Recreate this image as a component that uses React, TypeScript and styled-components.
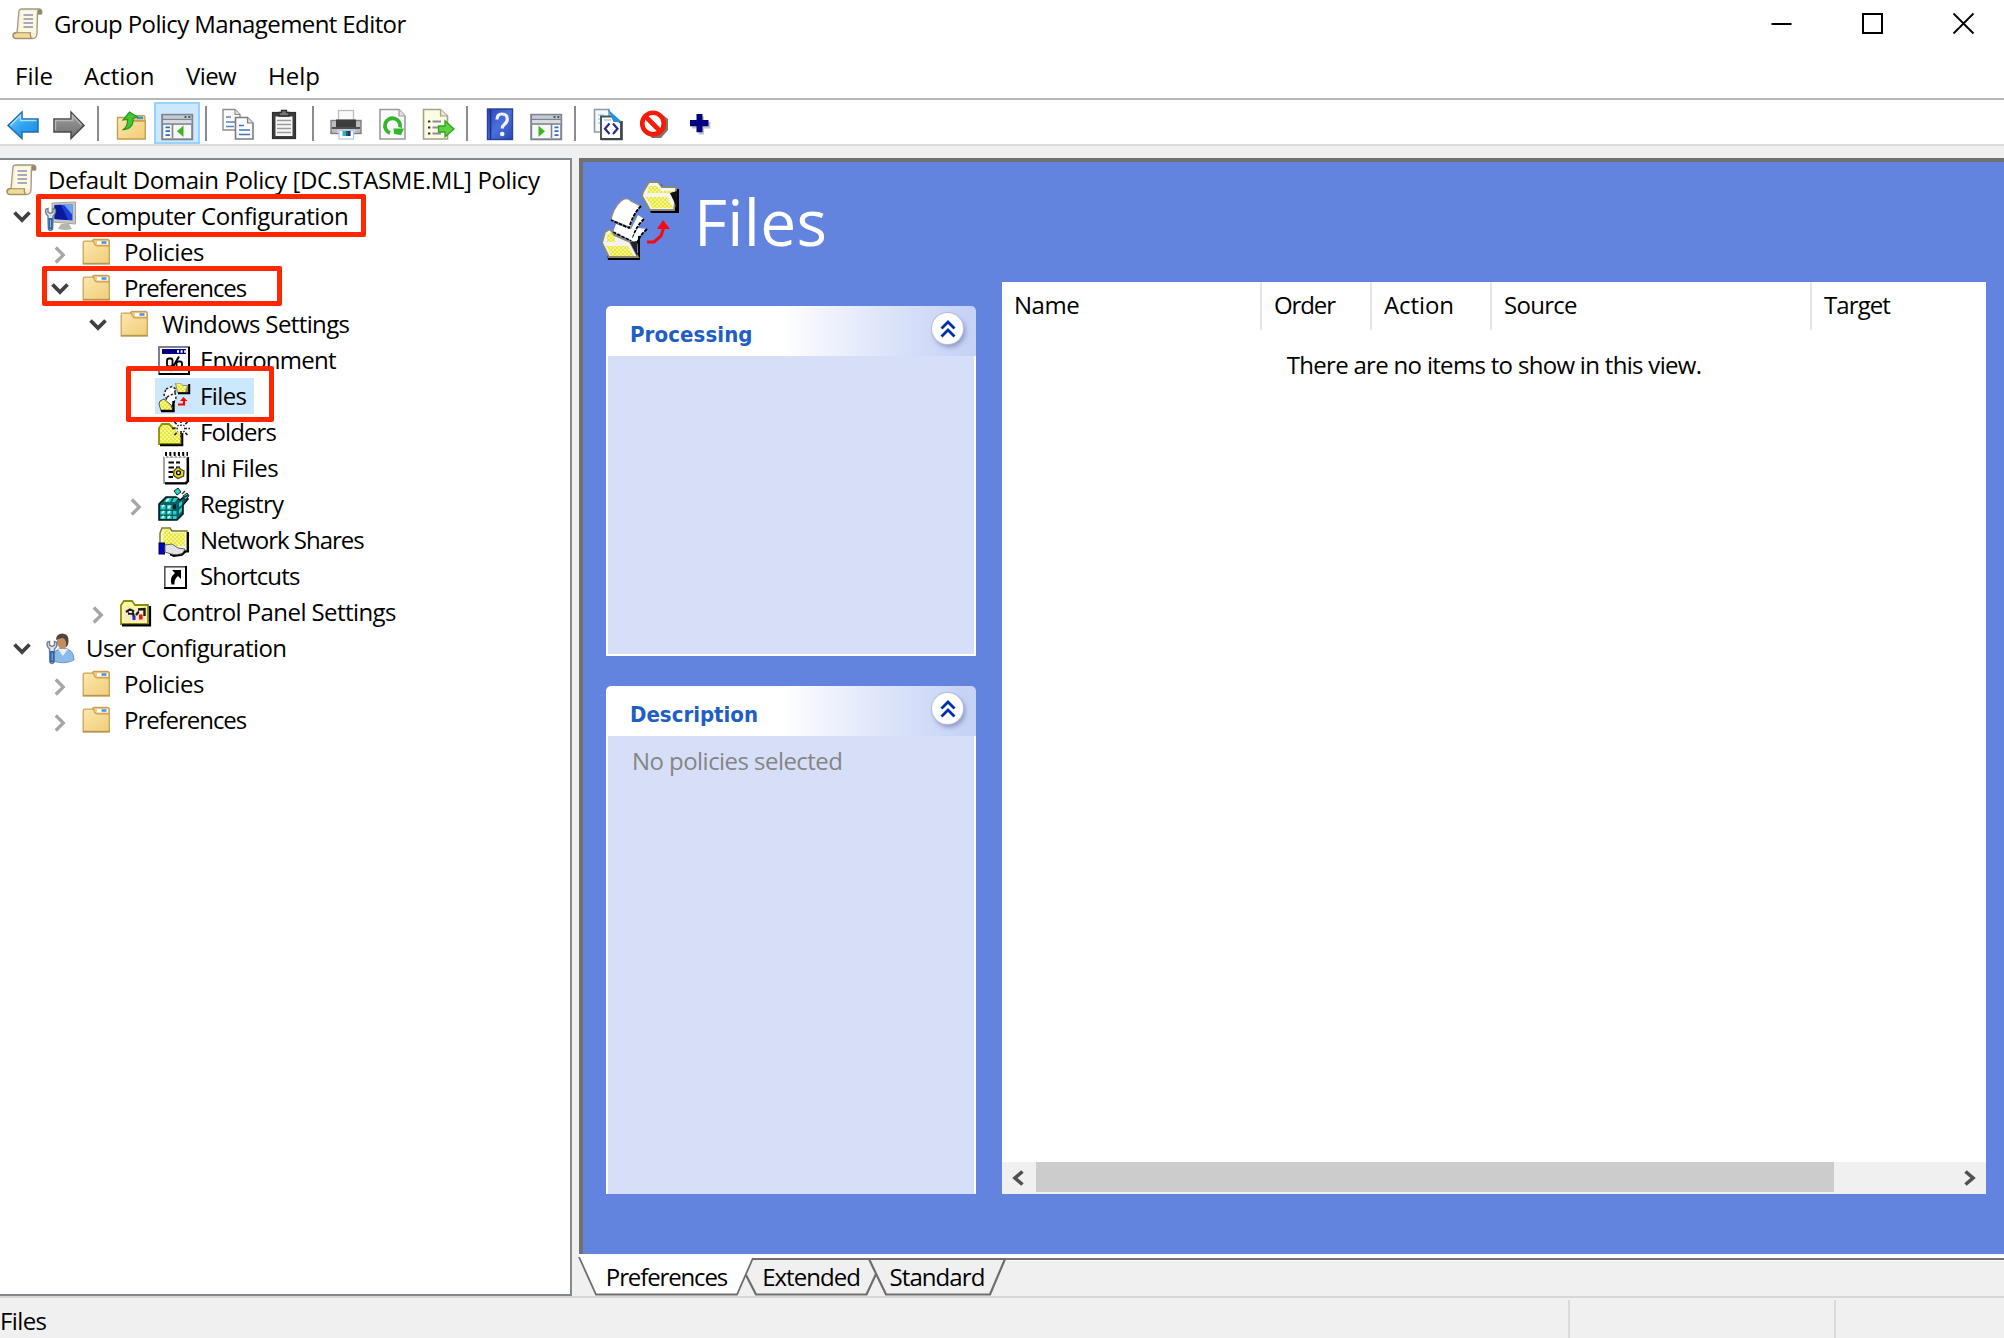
import React from "react";
import styled, { createGlobalStyle, css } from "styled-components";

const GlobalStyle = createGlobalStyle`
  * { box-sizing: border-box; }
  html, body { margin: 0; padding: 0; background: #ffffff; overflow: hidden; }
  svg { display: block; flex: none; overflow: visible; }
`;

/* ---------- shared ---------- */

const Text = styled.span<{ $ls?: number }>`
  white-space: nowrap;
  letter-spacing: ${(p) => p.$ls ?? -0.6}px;
`;

const Window = styled.div`
  width: 2004px;
  height: 1338px;
  display: flex;
  flex-direction: column;
  background: #f0f0f0;
  color: #000000;
  font-family: "Open Sans", "Noto Sans", sans-serif;
  font-size: 24px;
  line-height: 36px;
`;

/* ---------- title bar and menu ---------- */

const TitleBar = styled.header`
  flex: none;
  height: 46px;
  display: flex;
  align-items: center;
  padding: 1px 0 0 12px;
  gap: 10px;
  background: #ffffff;
`;

const WindowControls = styled.div`
  margin-left: auto;
  display: flex;
  height: 46px;
  padding-right: 30px;
  gap: 70px;
`;

const ControlButton = styled.button`
  width: 21px;
  height: 45px;
  padding: 0;
  border: 0;
  background: none;
  display: flex;
  align-items: center;
`;

const MenuBar = styled.nav`
  flex: none;
  height: 52px;
  display: flex;
  gap: 30px;
  padding: 12px 0 0 15px;
  background: #ffffff;
`;

const MenuItem = styled(Text)<{ $w: number }>`
  width: ${(p) => p.$w}px;
`;

/* ---------- toolbar ---------- */

const Toolbar = styled.div`
  flex: none;
  height: 48px;
  display: flex;
  align-items: flex-start;
  padding: 2px 0 0 0;
  background: #ffffff;
  border-top: 2px solid #b4b6b8;
  border-bottom: 2px solid #dcdcdc;
`;

const ToolButton = styled.button<{ $active?: boolean }>`
  flex: none;
  width: 46px;
  height: 42px;
  padding: 2px 0 0;
  border: 0;
  display: flex;
  align-items: center;
  justify-content: center;
  background: ${(p) => (p.$active ? "#cce8ff" : "none")};
  box-shadow: ${(p) => (p.$active ? "inset 0 0 0 2px #99d1ff" : "none")};
`;

const ToolSeparator = styled.div<{ $after: number }>`
  flex: none;
  width: 2px;
  height: 35px;
  margin: 4px ${(p) => p.$after}px 0 5px;
  background: #8c8c8c;
`;

/* ---------- main area ---------- */

const Main = styled.main`
  flex: none;
  height: 1138px;
  margin-top: 12px;
  display: flex;
`;

const TreePane = styled.aside`
  position: relative;
  flex: none;
  width: 572px;
  height: 1138px;
  border: 2px solid #828790;
  border-left: 0;
  background: #ffffff;
  padding-top: 2px;
`;

const TreeRow = styled.div<{ $level: number }>`
  height: 36px;
  display: flex;
  align-items: center;
  padding-left: ${(p) => (p.$level === 0 ? 6 : p.$level * 38 - 30)}px;
`;

const Expander = styled.div<{ $open?: boolean }>`
  flex: none;
  width: 26px;
  margin-right: 7px;
  display: flex;
  justify-content: center;
  padding-left: 1px;
  padding-top: ${(p) => (p.$open ? 2 : 6)}px;
`;

const NodeBody = styled.div<{ $selected?: boolean; $root?: boolean }>`
  height: 36px;
  display: flex;
  align-items: center;
  padding-left: ${(p) => (p.$root ? 0 : 3)}px;
  padding-right: 8px;
  gap: 10px;
  background: ${(p) => (p.$selected ? "#cce8ff" : "transparent")};
`;

const NodeLabel = styled(Text)`
  padding-bottom: 1px;
`;

const Callout = styled.div<{ $x: number; $y: number; $w: number; $h: number }>`
  position: absolute;
  left: ${(p) => p.$x}px;
  top: ${(p) => p.$y}px;
  width: ${(p) => p.$w}px;
  height: ${(p) => p.$h}px;
  border: 5.5px solid #ff2600;
  border-radius: 2px;
`;

const ResultPane = styled.section`
  flex: 1;
  margin-left: 7px;
  display: flex;
  flex-direction: column;
`;

const ResultView = styled.div`
  height: 1096px;
  border-top: 4px solid #70726f;
  border-left: 4px solid #70726f;
  background: #6284de;
  padding: 14px 18px 0 16px;
`;

const ViewHeader = styled.div`
  height: 106px;
  display: flex;
`;

const LargeIconSlot = styled.div`
  flex: none;
  width: 83px;
  padding: 5px 0 0 1px;
`;

const ViewTitle = styled.h1`
  margin: 6px 0 0 12px;
  font-size: 64px;
  line-height: 80px;
  font-weight: 400;
  letter-spacing: 0.3px;
  color: #ffffff;
`;

const ViewColumns = styled.div`
  display: flex;
  align-items: flex-start;
  gap: 26px;
  padding-left: 7px;
`;

const CardColumn = styled.div`
  flex: none;
  width: 370px;
  padding-top: 24px;
  display: flex;
  flex-direction: column;
  gap: 30px;
`;

const Card = styled.section<{ $h: number }>`
  height: ${(p) => p.$h}px;
  display: flex;
  flex-direction: column;
  border-radius: 5px 5px 0 0;
  overflow: hidden;
`;

const CardHeader = styled.header`
  flex: none;
  height: 50px;
  display: flex;
  justify-content: space-between;
  padding: 0 13px 0 24px;
  background: linear-gradient(to right, #ffffff 0%, #ffffff 47%, #dfe6fa 74%, #c6d3f7 97%);
`;

const CardTitle = styled.h2<{ $ls: number }>`
  margin: 9px 0 0;
  font-family: "DejaVu Sans Condensed", "DejaVu Sans", sans-serif;
  font-size: 22px;
  line-height: 40px;
  font-weight: 700;
  letter-spacing: ${(p) => p.$ls}px;
  color: #215dc6;
`;

const CollapseButton = styled.button`
  width: 31px;
  height: 31px;
  margin: 7px 0 0;
  padding: 0;
  border: 0;
  border-radius: 50%;
  display: flex;
  align-items: center;
  justify-content: center;
  background: #ffffff;
  box-shadow: 0 0 0 1px #b6bedb, 2px 3px 5px rgba(80, 95, 150, 0.55);
`;

const CardBody = styled.div<{ $open?: boolean }>`
  flex: 1;
  padding: 7px 0 0 24px;
  background: #d6dff7;
  border: 2px solid #ffffff;
  border-top: 0;
  color: #858585;
  ${(p) =>
    p.$open &&
    css`
      border-bottom: 0;
    `}
`;

const ListView = styled.div`
  flex: 1;
  height: 912px;
  display: flex;
  flex-direction: column;
  background: #ffffff;
`;

const ListHead = styled.div`
  flex: none;
  height: 48px;
  display: flex;
`;

const HeadCell = styled.div<{ $w: number; $last?: boolean }>`
  flex: none;
  width: ${(p) => p.$w}px;
  padding: 5px 0 0 12px;
  border-right: ${(p) => (p.$last ? "0" : "2px solid #e5e5e5")};
`;

const EmptyNote = styled.div`
  flex: 1;
  padding-top: 17px;
  text-align: center;
`;

const ScrollBar = styled.div`
  flex: none;
  height: 32px;
  display: flex;
  align-items: center;
  justify-content: space-between;
  padding: 0 10px;
  background: #f0f0f0;
`;

const ScrollThumb = styled.div`
  width: 798px;
  height: 30px;
  align-self: flex-start;
  margin-right: 118px;
  background: #cccccc;
`;

const SheetTabs = styled.div`
  flex: 1;
  display: flex;
  border-top: 4px solid #ffffff;
`;

const TabsTail = styled.div`
  flex: 1;
  margin-left: -5px;
  height: 3px;
  border-top: 2px solid #757575;
  border-bottom: 1px solid #fafafa;
`;

const Tab = styled.div<{ $w: number; $lap: number; $z: number }>`
  position: relative;
  z-index: ${(p) => p.$z};
  flex: none;
  width: ${(p) => p.$w}px;
  height: 38px;
  margin-left: ${(p) => p.$lap}px;
  display: flex;
  justify-content: center;
`;

const TabShape = styled.svg`
  position: absolute;
  left: 0;
  top: 0;
`;

const TabLabel = styled(Text)<{ $shift?: number }>`
  position: relative;
  padding-left: ${(p) => p.$shift ?? 0}px;
  line-height: 37px;
`;

const StatusBar = styled.footer`
  flex: 1;
  display: flex;
  border-top: 2px solid #d7d7d7;
`;

const StatusCell = styled.div<{ $w: number }>`
  width: ${(p) => p.$w}px;
  margin-top: 2px;
  padding-top: 3px;
  border-right: 2px solid #dadada;
`;

/* ---------- glyphs ---------- */

const Chevron = ({ open }: { open: boolean }) =>
  open ? (
    <svg width="18" height="12" viewBox="0 0 18 12">
      <path d="M1.5 1.5 9 9 16.5 1.5" fill="none" stroke="#404040" strokeWidth="3.8" />
    </svg>
  ) : (
    <svg width="12" height="18" viewBox="0 0 12 18">
      <path d="M1.8 1.5 9.3 9 1.8 16.5" fill="none" stroke="#a6a6a6" strokeWidth="3.2" />
    </svg>
  );

const Icon = ({ children }: { children: React.ReactNode }) => (
  <svg width="32" height="32" viewBox="0 0 32 32">
    {children}
  </svg>
);

const ScrollIcon = () => (
  <Icon>
    <path d="M7 2.5 Q7.5 1 10 1 H27 Q31 1.5 29.5 6 H25.5 L25 26 Q24.5 30.5 20.5 30.5 H4 Q.5 30 1 26.5 Q1.5 24.5 5 24.5 Z" fill="#f7efcf" stroke="#a39a86" strokeWidth="1.3" />
    <path d="M9 3 H24 V25 H8 Z" fill="#fdf8e2" />
    <path d="M25.5 6 Q24.5 1.5 27 1.3 Q31 1.5 29.5 6 Z" fill="#94876a" />
    <path d="M4 24.8 H18.5 Q17.5 27 19.5 30.3 H4 Q.7 30 1.2 26.6 Z" fill="#efdc9c" stroke="#a08c5c" strokeWidth="1.1" />
    <path d="M11.5 7 H21 M11.5 11 H21 M11.5 15 H21 M11.5 19 H21" stroke="#8d8fae" strokeWidth="1.6" />
  </Icon>
);

const FolderIcon = () => (
  <Icon>
    <path d="M10.5 10 V5.5 Q10.5 3.5 12.5 3.5 H25 Q27.3 3.5 27.3 5.5 V10 Z" fill="#f0d085" stroke="#c7a055" strokeWidth="1.3" />
    <rect x="15" y="5" width="11" height="3.4" fill="#fdfdfd" />
    <rect x="19.5" y="5.2" width="5" height="2.6" fill="#4a97e0" />
    <path d="M1.2 7 Q1.2 5.2 3 5.2 H11.5 Q12.5 9.8 15 9.8 H25.5 Q27.3 9.8 27.3 11.5 V27.8 H1.2 Z" fill="url(#folderFill)" stroke="#caa35a" strokeWidth="1.3" />
    <path d="M1 27.6 H27.8" stroke="#b79552" strokeWidth="1.6" />
  </Icon>
);

const Wrench = () => (
  <>
    <path d="M2 9 Q.5 13 4 16 L4.3 28 Q4.5 30.5 6.5 30.5 Q8.5 30.5 8.7 28 L9 16 Q12.5 13 11 9 L9 8.5 V12 L6.5 13.5 L4 12 V8.5 Z" fill="#dfe5ec" stroke="#6f7d8e" strokeWidth="1.4" />
    <path d="M5.4 19 H7.8 V28.5 H5.4 Z" fill="#fff" stroke="#2c67ae" strokeWidth="1.9" />
  </>
);

const ComputerIcon = () => (
  <Icon>
    <path d="M8 3 L31.5 2 V24 L8 22 Z" fill="#c9c9c4" stroke="#a3a39c" />
    <path d="M10.5 5 L28.5 4.5 V20.5 L10.5 19 Z" fill="#1c3fd6" />
    <path d="M10.5 5 L17 4.8 L24 20.1 L10.5 19 Z" fill="#0b18a0" />
    <path d="M20 4.8 L28.5 4.5 V15 Z" fill="#6ea4f8" />
    <path d="M17 24 H25 L28 29 Q22 31 14 29 Z" fill="#b5b5b1" />
    <Wrench />
  </Icon>
);

const UserIcon = () => (
  <Icon>
    <path d="M9 29 Q8 17 19 16 Q30 17 30 28 Q20 33 9 29 Z" fill="#8dbbe9" stroke="#6b98cb" />
    <path d="M14 17 L19 24 L24 17 Z" fill="#e6f1fc" />
    <ellipse cx="18.5" cy="9.5" rx="5.6" ry="7.6" fill="#c08e5f" />
    <path d="M12 8 Q12 1.5 18.5 1.5 Q25.5 2 24.5 10 Q24 14 22 15 Q23 8 19 6 Q15 6.5 12 8 Z" fill="#4e4640" />
    <g transform="translate(1.5 1)">
      <Wrench />
    </g>
  </Icon>
);

const EnvironmentIcon = () => (
  <Icon>
    <rect x="1" y="3" width="30" height="27" fill="#fff" stroke="#7e7e8c" strokeWidth="2" />
    <path d="M31 3 V30 H1" fill="none" stroke="#000" strokeWidth="2" />
    <rect x="4" y="5" width="24" height="5" fill="#000080" />
    <path d="M19 7.5 H28" stroke="#fff" strokeWidth="2.4" strokeDasharray="2 1.6" />
    <rect x="9" y="14.5" width="5.5" height="8" rx="2" fill="none" stroke="#000" strokeWidth="1.8" />
    <path d="M21 12.5 L12.500 27" stroke="#000" strokeWidth="2" />
    <rect x="18.5" y="17.5" width="5.5" height="8" rx="2" fill="none" stroke="#000" strokeWidth="1.8" />
  </Icon>
);

const FilesIcon = () => (
  <Icon>
    <path d="M17 3 H23 L25 5 H31 V13 H19 Z" fill="#8a8a8a" />
    <path d="M18 3.5 H23 L25 6 H29 L27 12 H20 Z" fill="url(#dither)" />
    <path d="M31.2 4 V13.2 H20" fill="none" stroke="#000" strokeWidth="2" />
    <path d="M8 9 L14 6.5 L18 9 L15 16 L9 19 L6 15 Z" fill="#fff" stroke="#222" strokeWidth="1.5" strokeDasharray="2.4 1.8" />
    <path d="M9 17 L17 13 L18 18 L14 26 L7 22 Z" fill="#fff" stroke="#222" strokeWidth="1.5" strokeDasharray="2.4 1.8" />
    <path d="M2 21 L6 19 L13 25 L15 31 H3 L1 24 Z" fill="url(#dither)" stroke="#555" />
    <path d="M3 31 H15.5 V21" fill="none" stroke="#000" strokeWidth="2.4" />
    <path d="M20 24.5 H26 V20" fill="none" stroke="#f00" strokeWidth="2.2" />
    <path d="M22 21 L25.5 17 L29.5 21 Z" fill="#f00" />
  </Icon>
);

const FoldersIcon = () => (
  <Icon>
    <path d="M1 12 L4 8 H11 L15 12 H23 V28 H1 Z" fill="url(#dither)" stroke="#8f8f00" strokeWidth="1.8" />
    <path d="M2 29.3 H24.3 V16" fill="none" stroke="#000" strokeWidth="2" />
    <circle cx="23" cy="12.5" r="5" fill="#fff" />
    <g stroke="#222" strokeWidth="1.7" strokeDasharray="3 1.4">
      <path d="M23 4 V10 M23 15 V21 M14 12.5 H20 M26 12.5 H32 M16.5 6 L20.5 10 M29.5 6 L25.5 10 M29.5 19 L25.5 15 M16.5 19 L20 15.5" />
    </g>
  </Icon>
);

const IniIcon = () => (
  <Icon>
    <path d="M6 5 H29 V28.5 L27 31 H6 Z" fill="#fff" stroke="#8c8c8c" strokeWidth="1.6" />
    <path d="M30 5 V29 L28 31.4 H7" fill="none" stroke="#000" strokeWidth="2.2" />
    <path d="M7 2 H30" stroke="#000" strokeWidth="4" strokeDasharray="2 2.3" />
    <path d="M6 4.6 H30" stroke="#fff" strokeWidth="1.6" strokeDasharray="2 2.3" />
    <path d="M10.5 10.5 H16 M18 10.5 H22 M10.5 15.5 H16 M18 15.5 H22 M10.5 20 H15 M10.5 25 H15" stroke="#000" strokeWidth="2.1" />
    <path d="M20 15 L23 17.5 L26 19 L25.5 24 L20 26.5 L15.5 23.5 L16 18.5 Z" fill="#e9e000" stroke="#444" strokeWidth="1.3" />
    <circle cx="20.5" cy="20.8" r="1.9" fill="#fff" stroke="#000" strokeWidth="1.3" />
  </Icon>
);

const RegistryIcon = () => (
  <Icon>
    <path d="M1 16 L8 9 H18 L22 12 L27 8 L30 11 L25 17 V26 L19 32 H1 Z" fill="#0d5f60" stroke="#001a1a" strokeWidth="1.6" />
    <g fill="#1ed3d3">
      <path d="M9 10 H14 L12 14 H6 Z M16 10 H20 L17 14 H14 Z" />
      <path d="M2.500 17 H7.500 V21.500 H2.500 Z M9 17 H13.500 V21.500 H9 Z M2.500 23 H7.500 V26.500 H2.500 Z M9 23 H13.500 V26.500 H9 Z M15 23 H18.500 V26.500 H15 Z M2.500 28 H7.500 V31 H2.500 Z M9 28 H13.500 V31 H9 Z M15 28 H18.500 V31 H15 Z" />
      <path d="M21 15 L24 13 V17 L21 19 Z M21 22 L24 19 V23 L21 26 Z" />
      <path d="M16 3 L20 0 L23 4 L19 7 Z M25 8 L29 5 L31 8 L27 12 Z" stroke="#222" strokeWidth="1" />
    </g>
    <path d="M4 19 L6 17 M10 20 L12 18 M4 25 L6 23 M10 25 L12 23 M4 30 L6 28 M10 30 L12 28 M8 13 L11 11" stroke="#fff" strokeWidth="1.6" />
    <path d="M15 17 L18 16 V21 H15 Z" fill="#001f20" />
    <path d="M24 6 L27 3 M26 9 L31 7" stroke="#333" strokeWidth="1.4" />
  </Icon>
);

const NetworkShareIcon = () => (
  <Icon>
    <path d="M2 9 L4 4 H12 L14 7 H29 V27 H2 Z" fill="#f4f4d8" stroke="#7c7c30" strokeWidth="1.5" />
    <path d="M5 9 L6 5 H11 L13 9 H27 V22 H5 Z" fill="url(#dither)" />
    <path d="M30 8 V27.5 H24" fill="none" stroke="#000" strokeWidth="2" />
    <rect x="1" y="19" width="5.5" height="11" fill="#0000c8" stroke="#000040" />
    <path d="M7 21 L14 20 L20 24 L27 25 L25 29 L19 31 L13 30 L7 28 Z" fill="#e4e4e4" stroke="#666" strokeWidth="1" />
    <path d="M12 30.5 L16 32 L24 31 L28 27" fill="none" stroke="#000" strokeWidth="1.8" />
  </Icon>
);

const ShortcutIcon = () => (
  <Icon>
    <rect x="6.8" y="6.8" width="21" height="21" fill="#fff" stroke="#555" strokeWidth="1.6" />
    <path d="M28 6 V28 H6" fill="none" stroke="#000" strokeWidth="2" />
    <path d="M14 10 H23 V19 L20 16 Q16 19 16.5 24.5 L13.5 24.5 Q11 18 17 13 Z" fill="#000" />
  </Icon>
);

const ControlPanelIcon = () => (
  <Icon>
    <path d="M1 28 V9 L4 5 H12 L15 9 H28 V28 Z" fill="#fbf6a6" stroke="#8c8c10" strokeWidth="1.8" />
    <path d="M4 12 H26 V26 H4 Z" fill="#fbe9c0" />
    <path d="M30 10 V29.3 H2" fill="none" stroke="#000" strokeWidth="2.2" />
    <path d="M6 16 L10 13.500 L14 15.500 M18 13.500 L24.500 13 V20 M8 17.500 H13 L14 21 M16 19 L19 15.500" fill="none" stroke="#1b1b1b" strokeWidth="2.4" />
    <path d="M9 16 H12 M19 16 H22" stroke="#fff" strokeWidth="1.5" />
    <rect x="12.5" y="19.500" width="3" height="4.500" fill="#1a2be0" />
    <rect x="19" y="18.500" width="3.6" height="5" fill="#e01a1a" />
  </Icon>
);

const FilesLargeIcon = () => (
  <svg width="80" height="80" viewBox="0 0 80 80">
    <path d="M46 5 L50 1 H58 L62 6 H76 V30 H48 L41 15 V10 L45 9 Z" fill="#000" transform="translate(3 2)" />
    <path d="M43 11 L49 1 H58 L62 6 H76 V14 L74 29 H50 L42 15 Z" fill="#f4f4f4" stroke="#8a8a72" strokeWidth="1.8" />
    <path d="M49 5 H57 L61 10 H73 V17 L69 12 H47 Z M46 16 H67 L73 27 H52 Z" fill="url(#dither)" />
    <path d="M70 12 L77 27 V10 Z" fill="#111" />
    <path d="M21 20 Q27 15 31 20 L41 25 Q33 33 31 47 L11 39 Q13 27 21 20 Z" fill="#fff" stroke="#8d8d8d" strokeWidth="1.4" />
    <path d="M38 34 L44 38 Q35 47 33 60 L13 51 L16 43 L31 48 Z" fill="#fff" />
    <path d="M41 25 Q33 33 29 47 L11 39" fill="none" stroke="#000" strokeWidth="1.8" strokeDasharray="3.500 1.200" />
    <path d="M44 38 Q36 45 33 57" fill="none" stroke="#000" strokeWidth="1.8" strokeDasharray="3.500 1.200" />
    <path d="M38 47 L47 48 Q36 57 35 66 L32 58 Z" fill="#fff" />
    <path d="M47 48 Q38 56 36 66 M13 51 L31 60" fill="none" stroke="#000" strokeWidth="1.8" strokeDasharray="3.500 1.200" />
    <path d="M7 72 L38 72 V55 L40 55 V79 H8 Z" fill="#000" />
    <path d="M2 62 L5 51 L10 48 L14 54 L30 61 L38 76 H9 Z" fill="#f2f2f2" stroke="#8a8a72" strokeWidth="1.8" />
    <path d="M7 54 L11 51 L15 57 V61 H7 Z M6 65 H28 L34 75 H11 Z" fill="url(#dither)" />
    <path d="M30 61 L37 75 V60 Z" fill="#222" />
    <path d="M47 61 H54 L61 55 L63 49 V45" fill="none" stroke="#f8080f" strokeWidth="3" />
    <path d="M57 48 L63 39 L70 48 Z" fill="#f8080f" />
  </svg>
);

const Defs = () => (
  <svg width="0" height="0">
    <defs>
      <pattern id="dither" width="4" height="4" patternUnits="userSpaceOnUse">
        <rect width="4" height="4" fill="#e8e83c" />
        <rect width="1.8" height="1.8" fill="#f8f8a4" />
        <rect x="2" y="2" width="1.8" height="1.8" fill="#f8f8a4" />
      </pattern>
      <linearGradient id="folderFill" x1="0" y1="0" x2="1" y2="1">
        <stop offset="0" stopColor="#fbe7ad" />
        <stop offset="1" stopColor="#f1cd78" />
      </linearGradient>
      <linearGradient id="blueArrow" x1="0" y1="0" x2="1" y2="1">
        <stop offset="0" stopColor="#8fd3fb" />
        <stop offset="0.5" stopColor="#2fa3ee" />
        <stop offset="1" stopColor="#1b8be0" />
      </linearGradient>
      <linearGradient id="grayArrow" x1="0" y1="0" x2="0" y2="1">
        <stop offset="0" stopColor="#a2a2a2" />
        <stop offset="1" stopColor="#6d6d6d" />
      </linearGradient>
      <linearGradient id="helpFill" x1="0" y1="0" x2="1" y2="1">
        <stop offset="0" stopColor="#2a45b8" />
        <stop offset="0.5" stopColor="#4a70dd" />
        <stop offset="1" stopColor="#2b48b4" />
      </linearGradient>
    </defs>
  </svg>
);

/* ---------- toolbar icons ---------- */

const BackIcon = () => (
  <Icon>
    <path d="M1 17.5 L15 4 V11 H31 V24 H15 V30.5 Z" fill="url(#blueArrow)" stroke="#1c6fae" strokeWidth="1.5" />
    <path d="M3.5 17.2 L13.5 7.5 V12.5 H29.5" fill="none" stroke="#a9defb" strokeWidth="1.4" />
  </Icon>
);

const ForwardIcon = () => (
  <Icon>
    <path d="M31 17.5 L18 4 V11 H1 V24 H18 V30.5 Z" fill="url(#grayArrow)" stroke="#4a4a4a" strokeWidth="1.5" />
    <path d="M2.5 22.5 V12.5 H19.5 V7.5 L28.5 17" fill="none" stroke="#b9b9b9" strokeWidth="1.4" />
  </Icon>
);

const UpFolderIcon = () => (
  <Icon>
    <path d="M17 12 V7.5 H29 Q30 7.5 30 9 V13 Z" fill="#f0d085" stroke="#c49c4e" strokeWidth="1.2" />
    <rect x="22" y="8.5" width="6" height="2.6" fill="#3f92e0" />
    <path d="M2.5 9.5 H13 L16 13 H30.3 V31 H2.5 Z" fill="url(#folderFill)" stroke="#c49c4e" strokeWidth="1.3" />
    <path d="M7.5 22 Q13 19 12.5 11.5 L8 12 L14.5 4 L22.5 9 L18 10.5 Q19 20.5 7.5 22 Z" fill="#47c52f" stroke="#2a9420" strokeWidth="1.2" />
  </Icon>
);

const PaneFrame = () => (
  <>
    <rect x="1.2" y="6.8" width="30" height="24.500" fill="#f8f8f8" stroke="#7e848d" strokeWidth="2" />
    <rect x="2" y="7.5" width="28.4" height="3.2" fill="#c4cad3" />
    <path d="M2 11.5 H30.4" stroke="#7e848d" strokeWidth="1.6" />
    <rect x="2" y="12.3" width="28.4" height="3" fill="#d8dde4" />
    <path d="M2 16 H30.4" stroke="#7e848d" strokeWidth="1.6" />
    <path d="M23.5 9 H25.5 M27.3 9 H29.3" stroke="#4d5664" strokeWidth="1.8" />
  </>
);

const ConsoleTreeIcon = () => (
  <Icon>
    <PaneFrame />
    <path d="M11.5 16 V30" stroke="#7e848d" strokeWidth="1.6" />
    <path d="M4.5 19.3 H9 M4.5 23.2 H9 M4.5 27.1 H9" stroke="#2f6fbf" strokeWidth="1.8" />
    <path d="M22.5 17.5 V29 L16 23.2 Z" fill="#3eb61f" />
  </Icon>
);

const ActionPaneIcon = () => (
  <Icon>
    <PaneFrame />
    <path d="M21.5 16 V30" stroke="#7e848d" strokeWidth="1.6" />
    <path d="M24.5 19.3 H28.5 M24.5 23.2 H28.5 M24.5 27.1 H28.5" stroke="#2f6fbf" strokeWidth="1.8" />
    <path d="M8.5 17.8 V29 L15 23.2 Z" fill="#3eb61f" />
  </Icon>
);

const CopyIcon = () => (
  <Icon>
    <path d="M1 1.5 H13 L18 6.5 V22 H1 Z" fill="#fbfbfb" stroke="#8f8f8f" strokeWidth="1.4" />
    <path d="M13 1.5 V6.5 H18" fill="#ddd" stroke="#8f8f8f" strokeWidth="1.2" />
    <path d="M4 9 H9 M4 14 H13 M4 18.5 H12" stroke="#5a86c4" strokeWidth="1.6" />
    <path d="M13.5 9.5 H25.5 L31 15 V31 H13.5 Z" fill="#fdfdfd" stroke="#7c7c7c" strokeWidth="1.6" />
    <path d="M25.5 9.5 V15 H31" fill="#ddd" stroke="#7c7c7c" strokeWidth="1.2" />
    <path d="M17 17.5 H22 M17 22 H28 M17 26.5 H28" stroke="#3f74bd" strokeWidth="1.7" />
  </Icon>
);

const ClipboardIcon = () => (
  <Icon>
    <rect x="4.5" y="4.5" width="23" height="26" fill="#3c3c3c" stroke="#2d2d2d" strokeWidth="1.2" />
    <rect x="7.5" y="8.5" width="17" height="19.5" fill="#f7f7f7" />
    <path d="M9 12.5 H23 M9 16.5 H23 M9 20.5 H23 M9 24.5 H23" stroke="#9a9a9a" strokeWidth="1.4" />
    <path d="M11 8 V4.5 H13.5 V2.5 H18.5 V4.5 H21 V8 Z" fill="#777" stroke="#2d2d2d" strokeWidth="1.3" />
  </Icon>
);

const PrinterIcon = () => (
  <Icon>
    <rect x="8.5" y="2.5" width="15" height="10" fill="#fafafa" stroke="#bdbdbd" strokeWidth="1.3" />
    <rect x="1" y="12.5" width="30" height="13" fill="#b9bdc2" stroke="#7e7e7e" strokeWidth="1.4" />
    <rect x="6" y="11.500" width="20" height="9" fill="#3d3d3d" />
    <rect x="2" y="19" width="28" height="2" fill="#505050" />
    <rect x="7" y="21.5" width="18" height="3.5" fill="#d8dde2" />
    <rect x="9" y="22.5" width="14.5" height="8.5" fill="#fff" stroke="#a8c8e6" strokeWidth="1.2" />
    <rect x="12.5" y="23" width="3" height="5" fill="#23b8c8" />
    <rect x="15.5" y="23" width="2.6" height="5" fill="#1d6a30" />
    <rect x="18" y="23" width="2.6" height="5" fill="#1a2f9c" />
  </Icon>
);

const RefreshIcon = () => (
  <Icon>
    <path d="M4 1.500 H23 L29 8 V31 H4 Z" fill="#f9f9f9" stroke="#9b9b9b" strokeWidth="1.6" />
    <path d="M23 1.500 V8 H29" fill="#e2e2e2" stroke="#9b9b9b" strokeWidth="1.2" />
    <path d="M14 25 A7.6 7.6 0 1 1 24 19.5" fill="none" stroke="#35b52a" strokeWidth="3.8" />
    <path d="M17.500 20.5 H28 L25 27 L18 26 Z" fill="#35b52a" />
  </Icon>
);

const ExportIcon = () => (
  <Icon>
    <path d="M1.5 1.5 H18.5 L25.5 8 V31 H1.5 Z" fill="#fdfbe2" stroke="#a3a08c" strokeWidth="1.6" />
    <path d="M18.5 1.5 V8 H25.5" fill="#e9e6d0" stroke="#a3a08c" strokeWidth="1.2" />
    <path d="M6 13.5 H8.3 M6 19.5 H8.3 M6 25.5 H8.3" stroke="#333" strokeWidth="2.2" />
    <path d="M10.5 13.5 H19 M10.5 19.5 H17 M10.5 25.5 H19" stroke="#8a8aa0" strokeWidth="1.8" />
    <path d="M16.5 18 H23 V12.8 L32 21 L23 28.8 V24 H16.5 Z" fill="#5fd23e" stroke="#33a322" strokeWidth="1.3" />
  </Icon>
);

const HelpIcon = () => (
  <Icon>
    <rect x="3.5" y="1" width="25" height="30.5" fill="url(#helpFill)" stroke="#2a3f96" strokeWidth="1.4" />
    <path d="M6.5 1.5 V31" stroke="#1c2f86" strokeWidth="1.6" />
    <path d="M13 11.5 Q13 6 18 6 Q23.3 6 23.3 11 Q23.3 14.3 20.3 16.5 Q18.3 18 18.3 20.5" fill="none" stroke="#f2f4ff" strokeWidth="3.2" />
    <circle cx="18.2" cy="26" r="2.3" fill="#f2f4ff" />
  </Icon>
);

const XmlIcon = () => (
  <Icon>
    <path d="M2.5 1.5 H17 V24 H2.5 Z" fill="#f6f9fc" stroke="#8c9aa6" strokeWidth="1.6" />
    <path d="M6 7 H12 M6 11 H10 M6 15 H9" stroke="#a8d4f2" strokeWidth="1.6" />
    <path d="M9 8.5 H20 L29 15 V31 H9 Z" fill="#fff" stroke="#4a5560" strokeWidth="2" />
    <path d="M15 .5 L30 14 H21.500 L19 8 Z" fill="#2490d8" />
    <path d="M29.8 13 V31.3 H9" fill="none" stroke="#3c464f" strokeWidth="2" />
    <path d="M12 12 H19" stroke="#a8d4f2" strokeWidth="1.6" />
    <path d="M17.5 15.5 L13 20.7 L17.5 26 M21 15.5 L25.5 20.7 L21 26" fill="none" stroke="#2a2a8c" strokeWidth="2.2" />
  </Icon>
);

const StopIcon = () => (
  <Icon>
    <path d="M12 5 H22 L30 11 V22 L23 30 H14 L6 23 Z" fill="#7f7268" />
    <circle cx="15" cy="15.500" r="10.8" fill="#fff" stroke="#f41c08" strokeWidth="4.6" />
    <path d="M7.5 8.500 L22.5 23.500" stroke="#f41c08" strokeWidth="4.6" />
  </Icon>
);

const PlusIcon = () => (
  <Icon>
    <path d="M14.5 8.5 H20 V14 H26.5 V20.5 H20 V26.5 H14.5 V20.5 H8 V14 H14.5 Z" fill="#c4c4c4" />
    <path d="M12.5 6 H18.5 V12 H24.5 V18.3 H18.5 V24.2 H12.5 V18.3 H6 V12 H12.5 Z" fill="#000080" />
  </Icon>
);

/* ---------- data ---------- */

type Node = {
  label: string;
  level: number;
  icon: () => React.ReactElement;
  ls: number;
  open?: boolean;
  selected?: boolean;
};

const nodes: Node[] = [
  { label: "Default Domain Policy [DC.STASME.ML] Policy", level: 0, icon: ScrollIcon, ls: -0.39 },
  { label: "Computer Configuration", level: 1, icon: ComputerIcon, ls: -0.46, open: true },
  { label: "Policies", level: 2, icon: FolderIcon, ls: -0.43, open: false },
  { label: "Preferences", level: 2, icon: FolderIcon, ls: -1.05, open: true },
  { label: "Windows Settings", level: 3, icon: FolderIcon, ls: -0.62, open: true },
  { label: "Environment", level: 4, icon: EnvironmentIcon, ls: -0.75 },
  { label: "Files", level: 4, icon: FilesIcon, ls: -0.6, selected: true },
  { label: "Folders", level: 4, icon: FoldersIcon, ls: -0.91 },
  { label: "Ini Files", level: 4, icon: IniIcon, ls: -0.56 },
  { label: "Registry", level: 4, icon: RegistryIcon, ls: -0.74, open: false },
  { label: "Network Shares", level: 4, icon: NetworkShareIcon, ls: -1.0 },
  { label: "Shortcuts", level: 4, icon: ShortcutIcon, ls: -0.81 },
  { label: "Control Panel Settings", level: 3, icon: ControlPanelIcon, ls: -0.58, open: false },
  { label: "User Configuration", level: 1, icon: UserIcon, ls: -0.62, open: true },
  { label: "Policies", level: 2, icon: FolderIcon, ls: -0.43, open: false },
  { label: "Preferences", level: 2, icon: FolderIcon, ls: -1.05, open: false },
];

const menus = [
  { label: "File", w: 39, ls: 0 },
  { label: "Action", w: 72, ls: 0 },
  { label: "View", w: 52, ls: -0.6 },
  { label: "Help", w: 60, ls: 0 },
];

const columns = [
  { label: "Name", w: 260, ls: -0.5 },
  { label: "Order", w: 110, ls: -1.1 },
  { label: "Action", w: 120, ls: -0.1 },
  { label: "Source", w: 320, ls: -0.72 },
  { label: "Target", w: 170, ls: -0.9 },
];

type Tool = { icon: () => React.ReactElement; name: string; active?: boolean };

const toolGroups: { gap: number; tools: Tool[] }[] = [
  {
    gap: 0,
    tools: [
      { icon: BackIcon, name: "back" },
      { icon: ForwardIcon, name: "forward" },
    ],
  },
  {
    gap: 9,
    tools: [
      { icon: UpFolderIcon, name: "up" },
      { icon: ConsoleTreeIcon, name: "tree", active: true },
    ],
  },
  {
    gap: 8,
    tools: [
      { icon: CopyIcon, name: "copy" },
      { icon: ClipboardIcon, name: "paste" },
    ],
  },
  {
    gap: 9,
    tools: [
      { icon: PrinterIcon, name: "print" },
      { icon: RefreshIcon, name: "refresh" },
      { icon: ExportIcon, name: "export" },
    ],
  },
  {
    gap: 9,
    tools: [
      { icon: HelpIcon, name: "help" },
      { icon: ActionPaneIcon, name: "actions" },
    ],
  },
  {
    gap: 9,
    tools: [
      { icon: XmlIcon, name: "xml" },
      { icon: StopIcon, name: "stop" },
      { icon: PlusIcon, name: "add" },
    ],
  },
];

const Collapse = () => (
  <CollapseButton>
    <svg width="16" height="18" viewBox="0 0 16 18">
      <path d="M1.5 8.5 8 2 14.5 8.5 M1.5 16.5 8 10 14.5 16.5" fill="none" stroke="#0030a8" strokeWidth="2.8" />
    </svg>
  </CollapseButton>
);

export default function App() {
  return (
    <>
      <GlobalStyle />
      <Window>
        <TitleBar>
          <ScrollIcon />
          <Text $ls={-0.6}>Group Policy Management Editor</Text>
          <WindowControls>
            <ControlButton>
              <svg width="21" height="21" viewBox="0 0 21 21">
                <path d="M.5 11 H20.5" stroke="#000" strokeWidth="2" />
              </svg>
            </ControlButton>
            <ControlButton>
              <svg width="21" height="21" viewBox="0 0 21 21">
                <rect x="1" y="1" width="19" height="19" fill="none" stroke="#000" strokeWidth="2" />
              </svg>
            </ControlButton>
            <ControlButton>
              <svg width="21" height="21" viewBox="0 0 21 21">
                <path d="M.5 .5 L20.5 20.5 M20.5 .5 L.5 20.5" stroke="#000" strokeWidth="1.8" />
              </svg>
            </ControlButton>
          </WindowControls>
        </TitleBar>

        <MenuBar>
          {menus.map((m) => (
            <MenuItem key={m.label} $w={m.w} $ls={m.ls}>
              {m.label}
            </MenuItem>
          ))}
        </MenuBar>

        <Toolbar>
          {toolGroups.map(({ gap, tools }, g) => (
            <React.Fragment key={g}>
              {g > 0 && <ToolSeparator $after={gap} />}
              {tools.map(({ icon: Glyph, name, active }) => (
                <ToolButton key={name} $active={active}>
                  <Glyph />
                </ToolButton>
              ))}
            </React.Fragment>
          ))}
        </Toolbar>

        <Main>
          <TreePane>
            {nodes.map(({ label, level, icon: Glyph, ls, open, selected }, i) => (
              <TreeRow key={i} $level={level}>
                {level > 0 && <Expander $open={open}>{open !== undefined && <Chevron open={open} />}</Expander>}
                <NodeBody $selected={selected} $root={level === 0}>
                  <Glyph />
                  <NodeLabel $ls={ls}>{label}</NodeLabel>
                </NodeBody>
              </TreeRow>
            ))}
            <Callout $x={36} $y={34} $w={330} $h={43} />
            <Callout $x={42} $y={106} $w={240} $h={40} />
            <Callout $x={126} $y={206} $w={148} $h={56} />
          </TreePane>

          <ResultPane>
            <ResultView>
              <ViewHeader>
                <LargeIconSlot>
                  <FilesLargeIcon />
                </LargeIconSlot>
                <ViewTitle>Files</ViewTitle>
              </ViewHeader>
              <ViewColumns>
                <CardColumn>
                  <Card $h={350}>
                    <CardHeader>
                      <CardTitle $ls={0.1}>Processing</CardTitle>
                      <Collapse />
                    </CardHeader>
                    <CardBody />
                  </Card>
                  <Card $h={508}>
                    <CardHeader>
                      <CardTitle $ls={0}>Description</CardTitle>
                      <Collapse />
                    </CardHeader>
                    <CardBody $open>
                      <Text $ls={-0.55}>No policies selected</Text>
                    </CardBody>
                  </Card>
                </CardColumn>
                <ListView>
                  <ListHead>
                    {columns.map((c, i) => (
                      <HeadCell key={c.label} $w={c.w} $last={i === columns.length - 1}>
                        <Text $ls={c.ls}>{c.label}</Text>
                      </HeadCell>
                    ))}
                  </ListHead>
                  <EmptyNote>
                    <Text $ls={-0.69}>There are no items to show in this view.</Text>
                  </EmptyNote>
                  <ScrollBar>
                    <svg width="12" height="16" viewBox="0 0 12 16">
                      <path d="M10.5 1.5 3 8 10.5 14.5" fill="none" stroke="#505050" strokeWidth="3.6" />
                    </svg>
                    <ScrollThumb />
                    <svg width="12" height="16" viewBox="0 0 12 16">
                      <path d="M1.5 1.5 9 8 1.5 14.5" fill="none" stroke="#505050" strokeWidth="3.6" />
                    </svg>
                  </ScrollBar>
                </ListView>
              </ViewColumns>
            </ResultView>

            <SheetTabs>
              <Tab $w={175} $lap={0} $z={2}>
                <TabShape width="175" height="39" viewBox="0 0 175 39">
                  <path d="M0 -1 L17 36.5 H158 L174 -1 Z" fill="#fff" />
                  <path d="M0 -1 L17 36.5 H158 L174 0" fill="none" stroke="#6e6e6e" strokeWidth="1.8" />
                </TabShape>
                <TabLabel $ls={-1.13}>Preferences</TabLabel>
              </Tab>
              <Tab $w={132} $lap={-9} $z={1}>
                <TabShape width="132" height="39" viewBox="0 0 132 39">
                  <path d="M8 1 H124" stroke="#6e6e6e" strokeWidth="2" />
                  <path d="M1 17 L11 36.5 H121.5 L131 16" fill="none" stroke="#6e6e6e" strokeWidth="2.2" />
                </TabShape>
                <TabLabel $ls={-0.97}>Extended</TabLabel>
              </Tab>
              <Tab $w={142} $lap={-12} $z={1}>
                <TabShape width="142" height="39" viewBox="0 0 142 39">
                  <path d="M4 1 H141" stroke="#6e6e6e" strokeWidth="2" />
                  <path d="M4 1 L21 36.5 H125 L140 1" fill="none" stroke="#6e6e6e" strokeWidth="2.2" />
                </TabShape>
                <TabLabel $ls={-0.94} $shift={2}>Standard</TabLabel>
              </Tab>
              <TabsTail />
            </SheetTabs>
          </ResultPane>
        </Main>

        <StatusBar>
          <StatusCell $w={1570}>
            <Text $ls={-0.6}>Files</Text>
          </StatusCell>
          <StatusCell $w={266} />
        </StatusBar>
      </Window>
      <Defs />
    </>
  );
}
